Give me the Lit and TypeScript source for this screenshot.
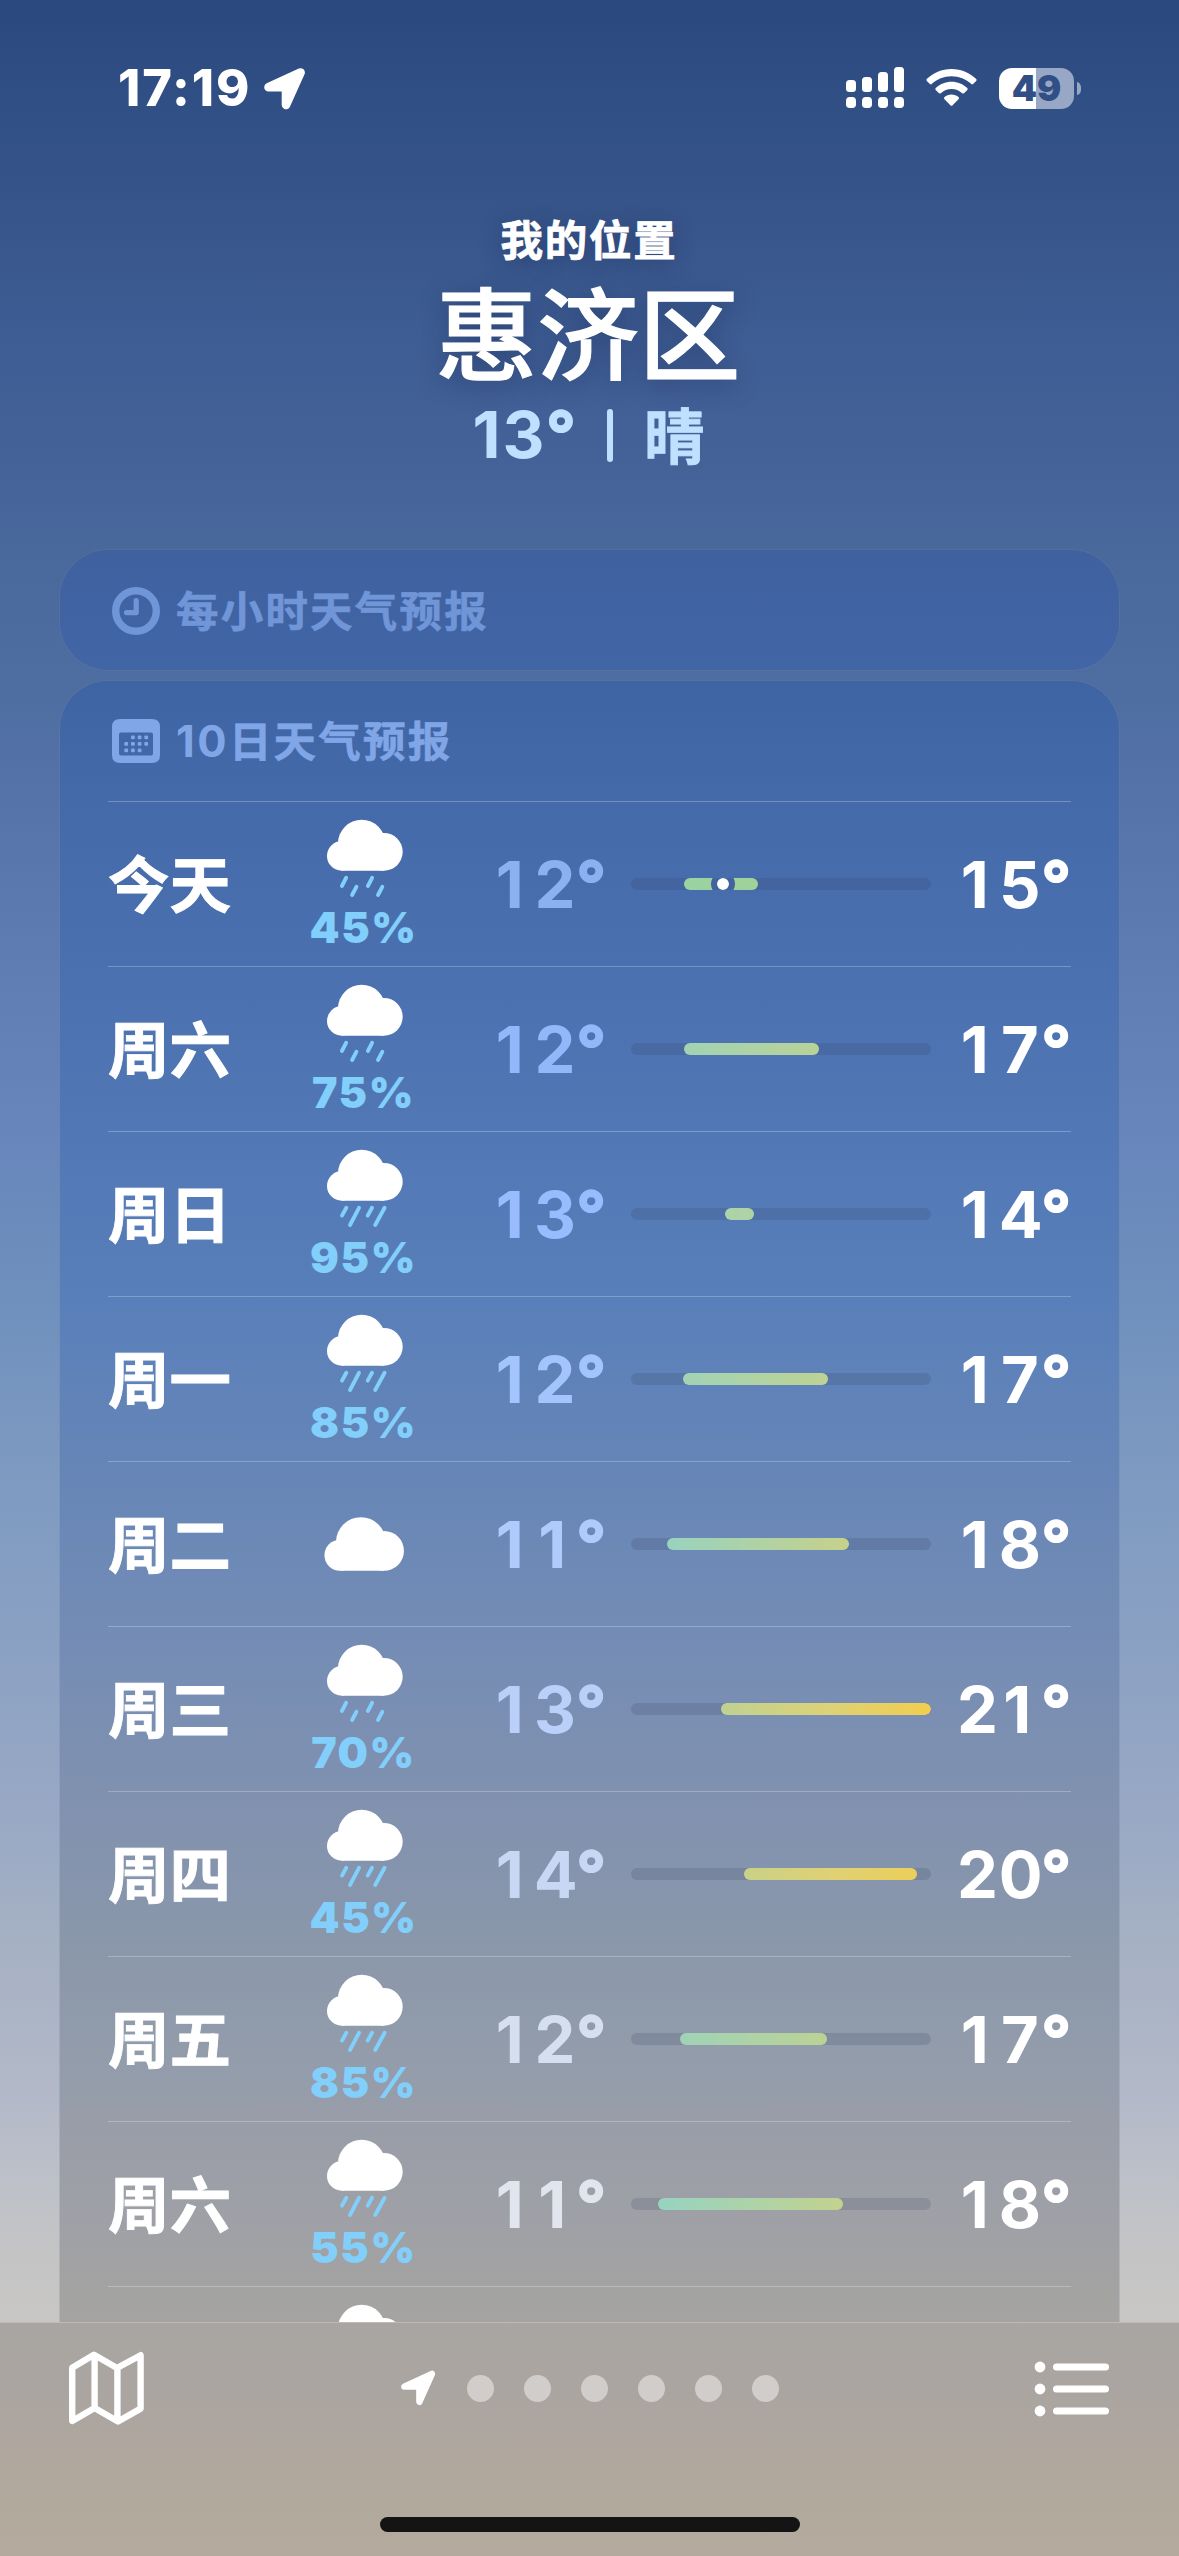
import { LitElement, html, css, svg } from "lit";
import { customElement, property } from "lit/decorators.js";

type Sky = "drizzle" | "rain" | "cloud";

interface Day {
  name: string;
  sky: Sky;
  chance?: string;
  low: string;
  high: string;
  lowColor: string;
  /** bar start and end along the 300px track */
  from: number;
  to: number;
  fill: string;
  now?: number;
}

const DAYS: Day[] = [
  { name: "今天", sky: "drizzle", chance: "45%", low: "12°", high: "15°", lowColor: "#8cb1f1", from: 53, to: 127, fill: "#9ad2a3, #a0d298", now: 92 },
  { name: "周六", sky: "drizzle", chance: "75%", low: "12°", high: "17°", lowColor: "#93b8fa", from: 53, to: 188, fill: "#a2d3b4, #b9d297" },
  { name: "周日", sky: "rain", chance: "95%", low: "13°", high: "14°", lowColor: "#98bcfd", from: 94, to: 123, fill: "#abd3aa, #aed3a4" },
  { name: "周一", sky: "rain", chance: "85%", low: "12°", high: "17°", lowColor: "#a3c4fc", from: 52, to: 197, fill: "#a2d3b4, #bed293" },
  { name: "周二", sky: "cloud", low: "11°", high: "18°", lowColor: "#afcbfb", from: 36, to: 218, fill: "#98d3bf, #c6d18a" },
  { name: "周三", sky: "drizzle", chance: "70%", low: "13°", high: "21°", lowColor: "#bbd0f8", from: 90, to: 300, fill: "#c0d192, #dcd277 50%, #f3ce4e" },
  { name: "周四", sky: "rain", chance: "45%", low: "14°", high: "20°", lowColor: "#c8d7f3", from: 113, to: 286, fill: "#c9d188, #dfd174 50%, #ebcf5a" },
  { name: "周五", sky: "rain", chance: "85%", low: "12°", high: "17°", lowColor: "#d5dff0", from: 49, to: 196, fill: "#9fd3b6, #bcd294" },
  { name: "周六", sky: "rain", chance: "55%", low: "11°", high: "18°", lowColor: "#e1e5ee", from: 27, to: 212, fill: "#96d3c1, #c3d28e" },
];

const arrow = (w: number) =>
  svg`<path d="M4.5 19.2 L36.6 4.5 L22 37 L22 19.2 Z" fill="#fff" stroke="#fff" stroke-width=${w} stroke-linejoin="round"/>`;

const cloud = svg`<g fill="#fff">
  <circle cx="23.8" cy="45.9" r="14.8"/>
  <circle cx="43.7" cy="33.4" r="23.7"/>
  <circle cx="65.8" cy="41.8" r="18.9"/>
  <path d="M23.8 34 H65.8 V60.7 H23.8 Z"/>
</g>`;

@customElement("sky-icon")
export class SkyIcon extends LitElement {
  static styles = css`
    :host { display: block; }
    .pic { display: block; width: 90px; height: 90px; }
    .big { width: 94.5px; height: 94.5px; margin-left: -1px; }
  `;
  @property() sky: Sky = "cloud";
  render() {
    if (this.sky === "cloud") {
      return html`<svg class="pic big" viewBox="0 0 90 90">${cloud}</svg>`;
    }
    const drops =
      this.sky === "rain"
        ? "M28.3 67.8 L24 75.6 M41 67.8 L32 85 M54 67.8 L49.7 75.6 M66.6 67.8 L57.2 85"
        : "M28.1 67.8 L23.9 76 M38.4 76.8 L34.1 85 M54.1 67.8 L49.9 76 M64.3 76.8 L60 85";
    return html`<svg class="pic" viewBox="0 0 90 90">
      ${cloud}
      <path d=${drops} stroke="#81cffa" stroke-width="3.9" stroke-linecap="round" fill="none" />
    </svg>`;
  }
}

@customElement("day-row")
export class DayRow extends LitElement {
  static styles = css`
    :host { display: block; }
    .row {
      box-sizing: border-box;
      height: 165px;
      border-top: 1px solid rgba(255, 255, 255, 0.25);
      display: grid;
      grid-template-columns: 200px 110px 213px 300px 1fr;
      align-items: center;
      color: #fff;
    }
    .name {
      font: 700 61.5px/80px "Noto Sans CJK SC", sans-serif;
      -webkit-text-stroke: 0.9px currentColor;
      margin-top: -4px;
    }
    .sky {
      height: 164px;
      display: flex;
      flex-direction: column;
      align-items: center;
      box-sizing: border-box;
      padding-top: 8px;
    }
    .dry { padding-top: 45px; }
    .chance {
      font: 900 42.8px/44px Inter, sans-serif;
      letter-spacing: 1.6px;
      color: #81cffa;
      margin-top: 6px;
      margin-right: -1px;
      white-space: nowrap;
    }
    .temp {
      font: 700 65px/80px Inter, sans-serif;
      text-align: right;
      white-space: nowrap;
      padding-top: 1px;
    }
    .digit { display: inline-block; box-sizing: border-box; width: 42.5px; text-align: center; }
    .one { padding-right: 5px; }
    .deg { -webkit-text-stroke: 1.4px currentColor; }
    .low { padding-right: 25px; }
    .track {
      height: 12px;
      border-radius: 6px;
      background: rgba(50, 60, 90, 0.17);
      display: flex;
      overflow: hidden;
    }
    .span {
      height: 12px;
      border-radius: 6px;
      flex: none;
      position: relative;
    }
    .now {
      position: absolute;
      top: -6px;
      width: 12px;
      height: 12px;
      border: 6px solid #4263a0;
      border-radius: 50%;
      background: #fff;
      background-clip: padding-box;
    }
  `;
  @property({ attribute: false }) day!: Day;

  /** Equal-width digits, so that the temperatures line up down the column. */
  private temp(text: string) {
    return [...text].map(
      (c) => html`<span class=${c === "°" ? "deg" : c === "1" ? "digit one" : "digit"}>${c}</span>`
    );
  }

  render() {
    const d = this.day;
    return html`<div class="row">
      <div class="name">${d.name}</div>
      <div class="sky ${d.chance ? "" : "dry"}">
        <sky-icon .sky=${d.sky}></sky-icon>
        ${d.chance ? html`<div class="chance">${d.chance}</div>` : ""}
      </div>
      <div class="temp low" style="color:${d.lowColor}">${this.temp(d.low)}</div>
      <div class="track">
        <div
          class="span"
          style="margin-left:${d.from}px;width:${d.to - d.from}px;background:linear-gradient(90deg, ${d.fill})"
        >
          ${d.now ? html`<i class="now" style="left:${d.now - d.from - 12}px"></i>` : ""}
        </div>
      </div>
      <div class="temp">${this.temp(d.high)}</div>
    </div>`;
  }
}

@customElement("app-root")
export class AppRoot extends LitElement {
  static styles = css`
    :host { display: block; }
    .screen {
      width: 1179px;
      height: 2556px;
      overflow: hidden;
      display: flex;
      flex-direction: column;
      font-family: Inter, "Noto Sans CJK SC", sans-serif;
      color: #fff;
      background: linear-gradient(
        180deg,
        #2b487e 0px, #304f85 100px, #365489 200px, #3e5d94 340px, #456399 480px,
        #49689b 550px, #4e6da1 690px, #5573a8 800px, #5f7db2 970px, #6886bb 1140px,
        #6f90bd 1300px, #7e9ac1 1480px, #8ba1c3 1650px, #99a9c5 1820px,
        #a4b0c3 1930px, #b3b9c8 2100px, #bec1c8 2190px, #c4c4c5 2250px, #c8c7c5 2322px
      );
    }
    .status {
      height: 174px;
      flex: none;
      display: flex;
      justify-content: space-between;
      align-items: center;
      box-sizing: border-box;
      padding: 2px 98px 0 118px;
    }
    .left, .right { display: flex; align-items: center; }
    .clock {
      font: 800 50.5px/60px Inter, sans-serif;
      letter-spacing: 1.9px;
      width: 135px;
      white-space: nowrap;
    }
    .loc { width: 42px; height: 43px; margin: 2px 0 0 11px; }
    .icon { display: block; }
    .wifi { margin-left: 22px; }
    .battery {
      width: 75px;
      height: 41px;
      border-radius: 13px;
      margin-left: 22px;
      background: linear-gradient(90deg, #fff 37px, #98a7c5 37px);
      display: flex;
      justify-content: center;
      align-items: center;
      font: 900 36px/41px Inter, sans-serif;
      color: #324f85;
    }
    .nub { margin-left: 3px; width: 4px; height: 13px; border-radius: 0 5px 5px 0 / 0 7px 7px 0; background: #98a7c5; }
    .head {
      height: 376px;
      flex: none;
      display: flex;
      flex-direction: column;
      align-items: center;
      box-sizing: border-box;
      padding-top: 34px;
      text-shadow: 0 6px 24px rgba(20, 30, 70, 0.4);
    }
    .mine {
      font: 700 42.5px/60px "Noto Sans CJK SC", sans-serif;
      letter-spacing: 1.8px;
      -webkit-text-stroke: 0.8px currentColor;
      margin-right: 1px;
    }
    .city {
      font: 500 101.5px/120px "Noto Sans CJK SC", sans-serif;
      -webkit-text-stroke: 1.2px currentColor;
      margin: 1px 3px 0 0;
    }
    .now {
      display: flex;
      align-items: center;
      height: 80px;
      margin: 6px 2px 0 0;
      color: #bfe0ff;
      text-shadow: none;
      font: 700 65px/80px Inter, sans-serif;
    }
    .deg { -webkit-text-stroke: 1.4px currentColor; }
    .reading { letter-spacing: 2px; }
    .sep { width: 6px; height: 53px; border-radius: 3px; background: #bfe0ff; margin: 0 31px 0 29px; }
    .cond {
      font: 700 60.5px/80px "Noto Sans CJK SC", sans-serif;
      -webkit-text-stroke: 0.9px currentColor;
      margin-top: -4px;
    }
    .card {
      margin: 0 60px;
      box-sizing: border-box;
      border-radius: 48px;
      flex: none;
      box-shadow: 0 0 0 1px rgba(110, 130, 160, 0.25);
    }
    .label {
      display: flex;
      align-items: center;
      height: 120px;
      padding-left: 52px;
      font: 700 42.5px/60px "Noto Sans CJK SC", sans-serif;
      letter-spacing: 2.2px;
      -webkit-text-stroke: 0.6px currentColor;
    }
    .label .icon { margin-right: 16px; }
    .title { margin-top: -4px; }
    .daily .title { margin-top: -3px; }
    .num { font: 700 43.5px/60px Inter, sans-serif; -webkit-text-stroke: 0; letter-spacing: 2.4px; }
    .hourly {
      height: 120px;
      box-sizing: border-box;
      padding-top: 1px;
      background: linear-gradient(180deg, #3f61a0, #4265a5);
      color: #7096d8;
    }
    .daily {
      margin-top: 11px;
      height: 1641px;
      border-radius: 48px 48px 0 0;
      overflow: hidden;
      color: #80a6e7;
      background: linear-gradient(
        180deg,
        #3e64a3 0px, #446aa9 120px, #4a70af 285px, #5177b5 450px, #597fba 615px,
        #6585b7 780px, #738cb5 945px, #8091b0 1110px, #8b98aa 1275px,
        #949dab 1400px, #999da8 1440px, #9ea0a7 1525px, #a2a2a3 1590px, #a5a4a1 1641px
      );
    }
    .rows { padding: 0 48px; }
    .next {
      border-top: 1px solid rgba(255, 255, 255, 0.25);
      padding: 8px 0 0 210px;
    }
    .bar {
      height: 234px;
      flex: none;
      box-sizing: border-box;
      border-top: 1px solid #bebab6;
      background: linear-gradient(180deg, #a8a5a2, #aca5a0 40%, #afa79e 54%, #b1a99d 70%, #b4aa9d);
      display: flex;
      flex-direction: column;
      align-items: center;
    }
    .tools {
      align-self: stretch;
      height: 131px;
      display: flex;
      align-items: center;
      justify-content: space-between;
      padding: 0 66px 0 66px;
    }
    .map { margin-top: -1px; }
    .pages { display: flex; align-items: center; margin-right: 1px; }
    .dot { width: 27px; height: 27px; border-radius: 50%; background: #d1cdca; margin-left: 30px; }
    .home { width: 420px; height: 15px; border-radius: 8px; background: #141414; margin-top: 63px; }
  `;

  render() {
    return html`<div class="screen">
      <div class="status">
        <div class="left">
          <span class="clock">17:19</span>
          <svg class="icon loc" viewBox="0 0 42 43">${arrow(8.6)}</svg>
        </div>
        <div class="right">
          <svg class="icon" width="58" height="42" viewBox="0 0 58 42" fill="#fff">
            <rect x="0" y="13" width="10" height="12" rx="3.5" />
            <rect x="16" y="10" width="10" height="15" rx="3.5" />
            <rect x="32" y="5" width="10" height="20" rx="3.5" />
            <rect x="48" y="0" width="10" height="25" rx="3.5" />
            <rect x="0" y="30" width="10" height="11" rx="3.8" />
            <rect x="16" y="30" width="10" height="11" rx="3.8" />
            <rect x="32" y="30" width="10" height="11" rx="3.8" />
            <rect x="48" y="30" width="10" height="11" rx="3.8" />
          </svg>
          <svg class="icon wifi" width="51" height="38" viewBox="0 0 51 38" fill="#fff">
            <path d="M25.5 0 C35.3 0 44 3.9 50.3 10.1 Q51 11 50.2 11.9 L47.1 15 Q46.2 15.8 45.3 15 C40 10 33.2 7.2 25.5 7.2 C17.8 7.2 11 10 5.7 15 Q4.8 15.8 3.9 15 L.8 11.9 Q0 11 .7 10.1 C7 3.9 15.7 0 25.5 0 Z" />
            <path d="M25.5 12.8 C31.6 12.8 37.2 15.2 41.3 19.1 Q42.1 20 41.3 20.9 L38 24.2 Q37.1 25 36.2 24.2 C33.3 21.6 29.6 20 25.5 20 C21.4 20 17.7 21.6 14.8 24.2 Q13.9 25 13 24.2 L9.7 20.9 Q8.9 20 9.7 19.1 C13.8 15.2 19.4 12.8 25.5 12.8 Z" />
            <path d="M25.5 25.5 C28.3 25.5 30.7 26.5 32.7 28.2 Q33.5 29 32.7 29.9 L26.4 36.4 Q25.5 37.3 24.6 36.4 L18.3 29.9 Q17.5 29 18.3 28.2 C20.3 26.5 22.7 25.5 25.5 25.5 Z" />
          </svg>
          <div class="battery">49</div>
          <div class="nub"></div>
        </div>
      </div>
      <div class="head">
        <div class="mine">我的位置</div>
        <div class="city">惠济区</div>
        <div class="now">
          <span class="reading">13<span class="deg">°</span></span><i class="sep"></i><span class="cond">晴</span>
        </div>
      </div>
      <div class="card hourly">
        <div class="label">
          <svg class="icon" width="48" height="48" viewBox="0 0 48 48" fill="none" stroke="#7096d8">
            <circle cx="24" cy="24" r="20.3" stroke-width="7.4" />
            <path d="M24.2 13.5 V25.6 H14.5" stroke-width="5.2" stroke-linecap="round" stroke-linejoin="round" />
          </svg>
          <span class="title">每小时天气预报</span>
        </div>
      </div>
      <div class="card daily">
        <div class="label">
          <svg class="icon" width="48" height="44" viewBox="0 0 48 44" fill="#80a6e7">
            <path fill-rule="evenodd" d="M8 0 H40 Q48 0 48 8 V36 Q48 44 40 44 H8 Q0 44 0 36 V8 Q0 0 8 0 Z M9 13.5 Q7 13.5 7 15.5 V34.5 Q7 36.5 9 36.5 H39 Q41 36.5 41 34.5 V15.5 Q41 13.5 39 13.5 Z" />
            ${[[19, 16.5], [25.7, 16.5], [32.3, 16.5], [12.3, 23], [19, 23], [25.7, 23], [32.3, 23], [12.3, 29.5], [19, 29.5], [25.7, 29.5]].map(
              ([x, y]) => svg`<rect x=${x} y=${y} width="3.8" height="3.8" rx="1"/>`
            )}
          </svg>
          <span class="title"><span class="num">10</span>日天气预报</span>
        </div>
        <div class="rows">
          ${DAYS.map((d) => html`<day-row .day=${d}></day-row>`)}
          <div class="next"><sky-icon .sky=${"rain"}></sky-icon></div>
        </div>
      </div>
      <div class="bar">
        <div class="tools">
          <svg class="icon map" width="80" height="76" viewBox="0 0 80 76" fill="none" stroke="#fff" stroke-width="6.4" stroke-linejoin="round">
            <path d="M6.2 17.8 L28 4.8 L51 18 L74.6 5.2 V58.6 L52 71.5 L28.6 58 L6.2 71 Z M28.6 4.8 V58 M51.4 18 V71" />
          </svg>
          <div class="pages">
            <svg class="icon" width="37" height="37" viewBox="0 0 42 43">${arrow(7.4)}</svg>
            ${[1, 2, 3, 4, 5, 6].map(() => html`<i class="dot"></i>`)}
          </div>
          <svg class="icon" width="80" height="56" viewBox="0 0 80 56" fill="#fff">
            ${[0, 22, 44].map(
              (y) => svg`<circle cx="7" cy=${y + 6} r="5.4"/><rect x="20" y=${y + 2.5} width="56" height="7" rx="3.5"/>`
            )}
          </svg>
        </div>
        <div class="home"></div>
      </div>
    </div>`;
  }
}
